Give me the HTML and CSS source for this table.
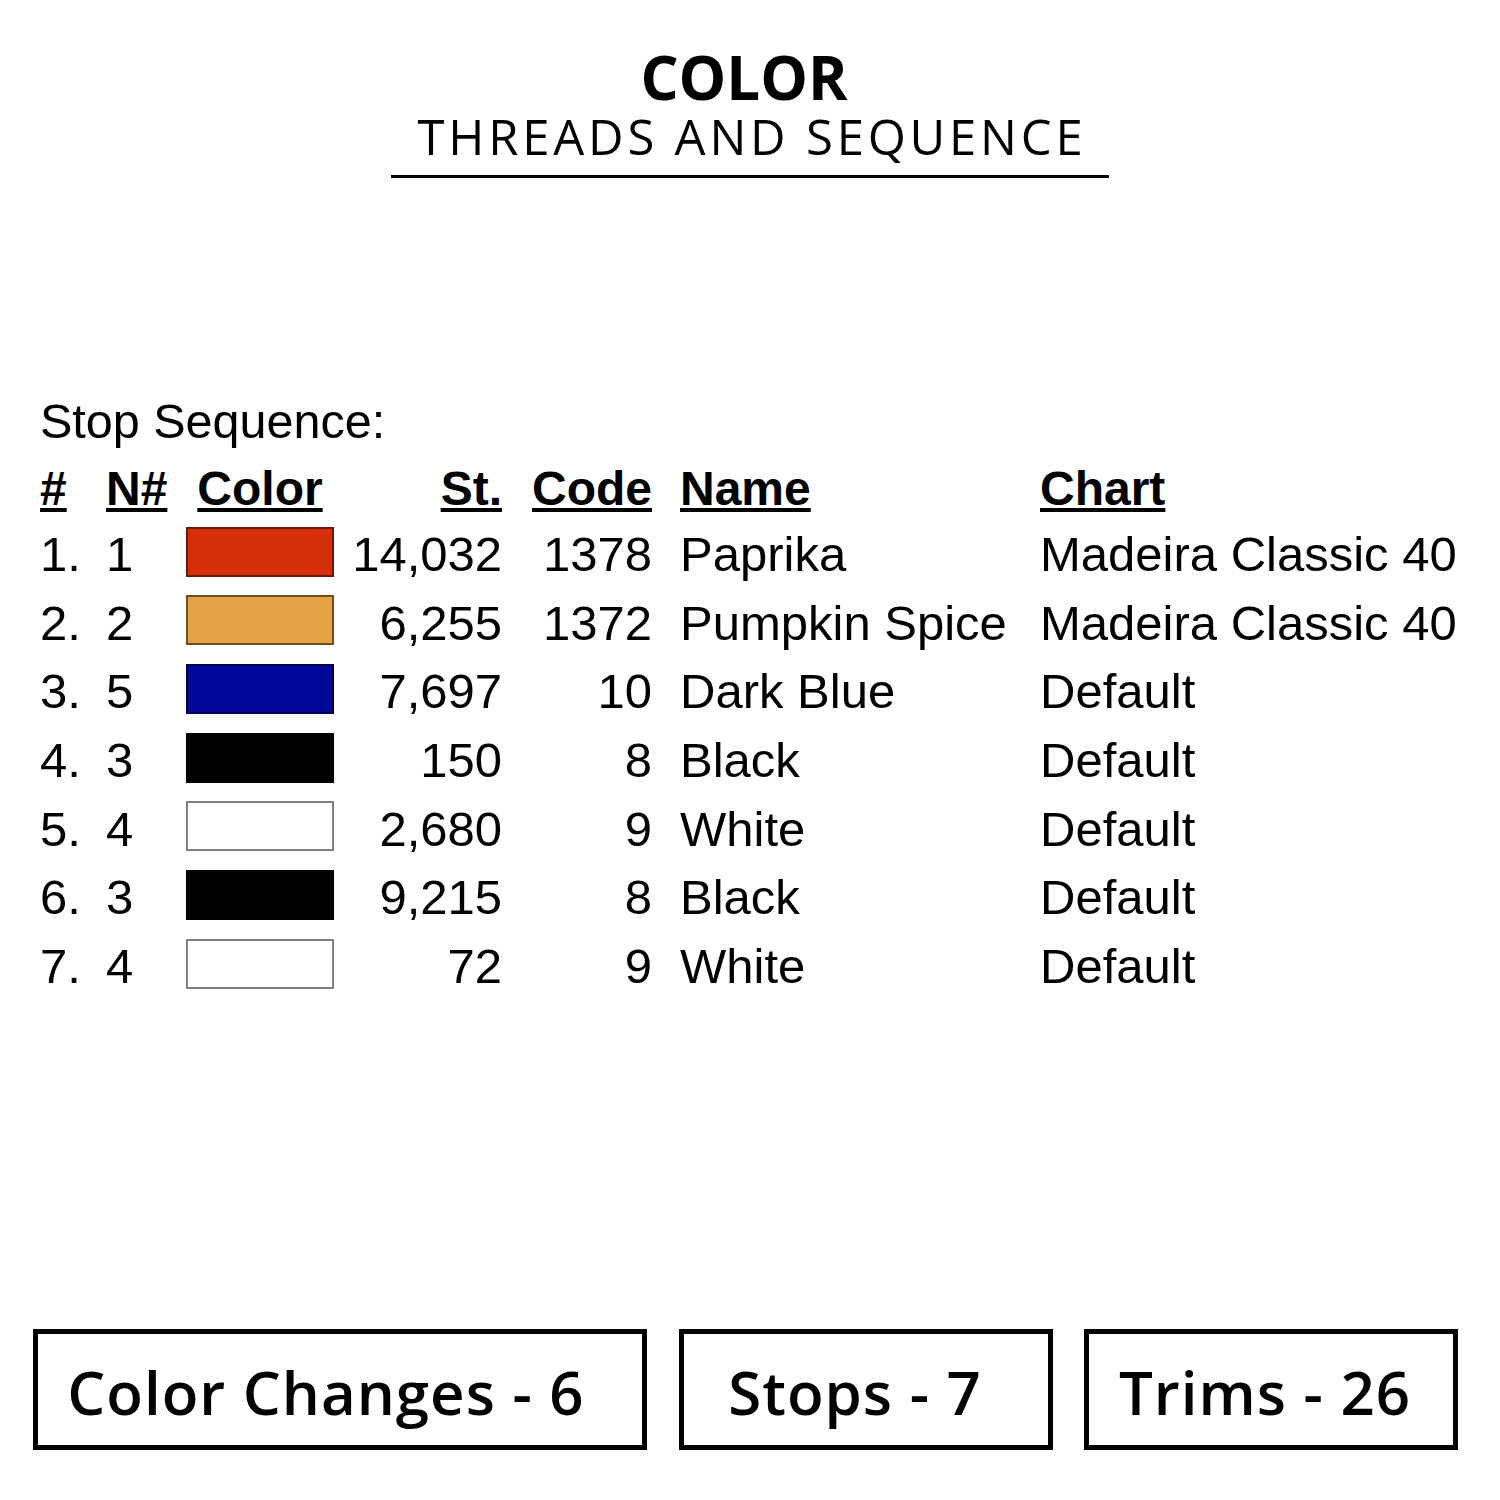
FILE: index.html
```html
<!DOCTYPE html>
<html lang="en">
<head>
<meta charset="utf-8">
<title>Color - Threads and Sequence</title>
<link rel="stylesheet" href="styles.css">
</head>
<body>
<div class="page">
  <header class="heading">
    <h1 class="heading-title">COLOR</h1>
    <h2 class="heading-sub">THREADS AND SEQUENCE</h2>
  </header>

  <section class="sequence">
    <p class="sequence-label">Stop Sequence:</p>
    <div class="seq-table">
      <div class="cell head"><u>#</u></div>
      <div class="cell head"><u>N#</u></div>
      <div class="cell head center"><u>Color</u></div>
      <div class="cell head right"><u>St.</u></div>
      <div class="cell head right"><u>Code</u></div>
      <div class="cell head name"><u>Name</u></div>
      <div class="cell head"><u>Chart</u></div>

      <div class="cell txt">1.</div><div class="cell txt">1</div>
      <div class="cell"><span class="swatch paprika"></span></div>
      <div class="cell txt right">14,032</div><div class="cell txt right">1378</div>
      <div class="cell txt name">Paprika</div><div class="cell txt">Madeira Classic 40</div>

      <div class="cell txt">2.</div><div class="cell txt">2</div>
      <div class="cell"><span class="swatch pumpkin"></span></div>
      <div class="cell txt right">6,255</div><div class="cell txt right">1372</div>
      <div class="cell txt name">Pumpkin Spice</div><div class="cell txt">Madeira Classic 40</div>

      <div class="cell txt">3.</div><div class="cell txt">5</div>
      <div class="cell"><span class="swatch darkblue"></span></div>
      <div class="cell txt right">7,697</div><div class="cell txt right">10</div>
      <div class="cell txt name">Dark Blue</div><div class="cell txt">Default</div>

      <div class="cell txt">4.</div><div class="cell txt">3</div>
      <div class="cell"><span class="swatch black"></span></div>
      <div class="cell txt right">150</div><div class="cell txt right">8</div>
      <div class="cell txt name">Black</div><div class="cell txt">Default</div>

      <div class="cell txt">5.</div><div class="cell txt">4</div>
      <div class="cell"><span class="swatch white"></span></div>
      <div class="cell txt right">2,680</div><div class="cell txt right">9</div>
      <div class="cell txt name">White</div><div class="cell txt">Default</div>

      <div class="cell txt">6.</div><div class="cell txt">3</div>
      <div class="cell"><span class="swatch black"></span></div>
      <div class="cell txt right">9,215</div><div class="cell txt right">8</div>
      <div class="cell txt name">Black</div><div class="cell txt">Default</div>

      <div class="cell txt">7.</div><div class="cell txt">4</div>
      <div class="cell"><span class="swatch white"></span></div>
      <div class="cell txt right">72</div><div class="cell txt right">9</div>
      <div class="cell txt name">White</div><div class="cell txt">Default</div>
    </div>
  </section>

  <footer class="stats">
    <div class="stat stat-wide">Color Changes - 6</div>
    <div class="stat stat-stops">Stops - 7</div>
    <div class="stat">Trims - 26</div>
  </footer>
</div>
</body>
</html>
```

FILE: styles.css
```css
html, body {
  margin: 0;
  padding: 0;
  background: #ffffff;
}

.page {
  width: 1500px;
  height: 1500px;
  box-sizing: border-box;
  padding-top: 47px;
  color: #000;
}

/* ---------- heading ---------- */
.heading {
  display: flex;
  flex-direction: column;
  align-items: center;
}

.heading-title {
  margin: 0;
  padding-right: 12px;
  font-family: "Open Sans", "Liberation Sans", sans-serif;
  font-weight: 700;
  font-size: 60px;
  line-height: 60px;
  letter-spacing: 0;
}

.heading-sub {
  margin: 5px 0 0;
  padding: 0 22px 14px 26px;
  border-bottom: 3px solid #000;
  font-family: "Open Sans", "Liberation Sans", sans-serif;
  font-weight: 400;
  font-size: 49px;
  line-height: 49px;
  letter-spacing: 3.8px;
}

/* ---------- sequence ---------- */
.sequence {
  margin-top: 219px;
  padding-left: 40px;
  font-family: "Liberation Sans", Arial, sans-serif;
  font-size: 49px;
  line-height: 48px;
}

.sequence-label {
  margin: 0;
  font-size: 48.5px;
  line-height: 48px;
}

.seq-table {
  margin-top: 13px;
  display: grid;
  grid-template-columns: 66px 80px 148px 168px 150px 388px auto;
  grid-template-rows: 59.3px;
  grid-auto-rows: 68.67px;
}

.cell {
  display: flex;
  align-items: center;
  white-space: nowrap;
}

.cell.txt {
  padding-top: 5px;
}

.cell.right {
  justify-content: flex-end;
}

.cell.center {
  justify-content: center;
}

.cell.name {
  padding-left: 28px;
}

.head {
  font-weight: 700;
  font-size: 48px;
  padding-top: 2px;
}

.head u {
  text-decoration-thickness: 4px;
  text-underline-offset: 3px;
}

.swatch {
  display: block;
  width: 148px;
  height: 50px;
  box-sizing: border-box;
  border: 2px solid rgba(0, 0, 0, 0.5);
}

.paprika { background: #d6300b; }
.pumpkin { background: #e3a344; }
.darkblue { background: #020899; }
.black { background: #000000; }
.white { background: #ffffff; }

/* ---------- stats ---------- */
.stats {
  margin-top: 331px;
  padding-left: 33px;
  display: flex;
  gap: 32px;
}

.stat {
  width: 374px;
  height: 121px;
  box-sizing: border-box;
  border: 5px solid #000;
  display: flex;
  align-items: center;
  justify-content: center;
  padding-top: 6px;
  padding-right: 12px;
  font-family: "Open Sans", "Liberation Sans", sans-serif;
  font-weight: 600;
  font-size: 60px;
  letter-spacing: 1px;
}

.stat-wide {
  width: 614px;
  padding-right: 28px;
}

.stat-stops {
  padding-right: 22px;
}

.stat + .stat + .stat {
  margin-left: -1px;
}
```
